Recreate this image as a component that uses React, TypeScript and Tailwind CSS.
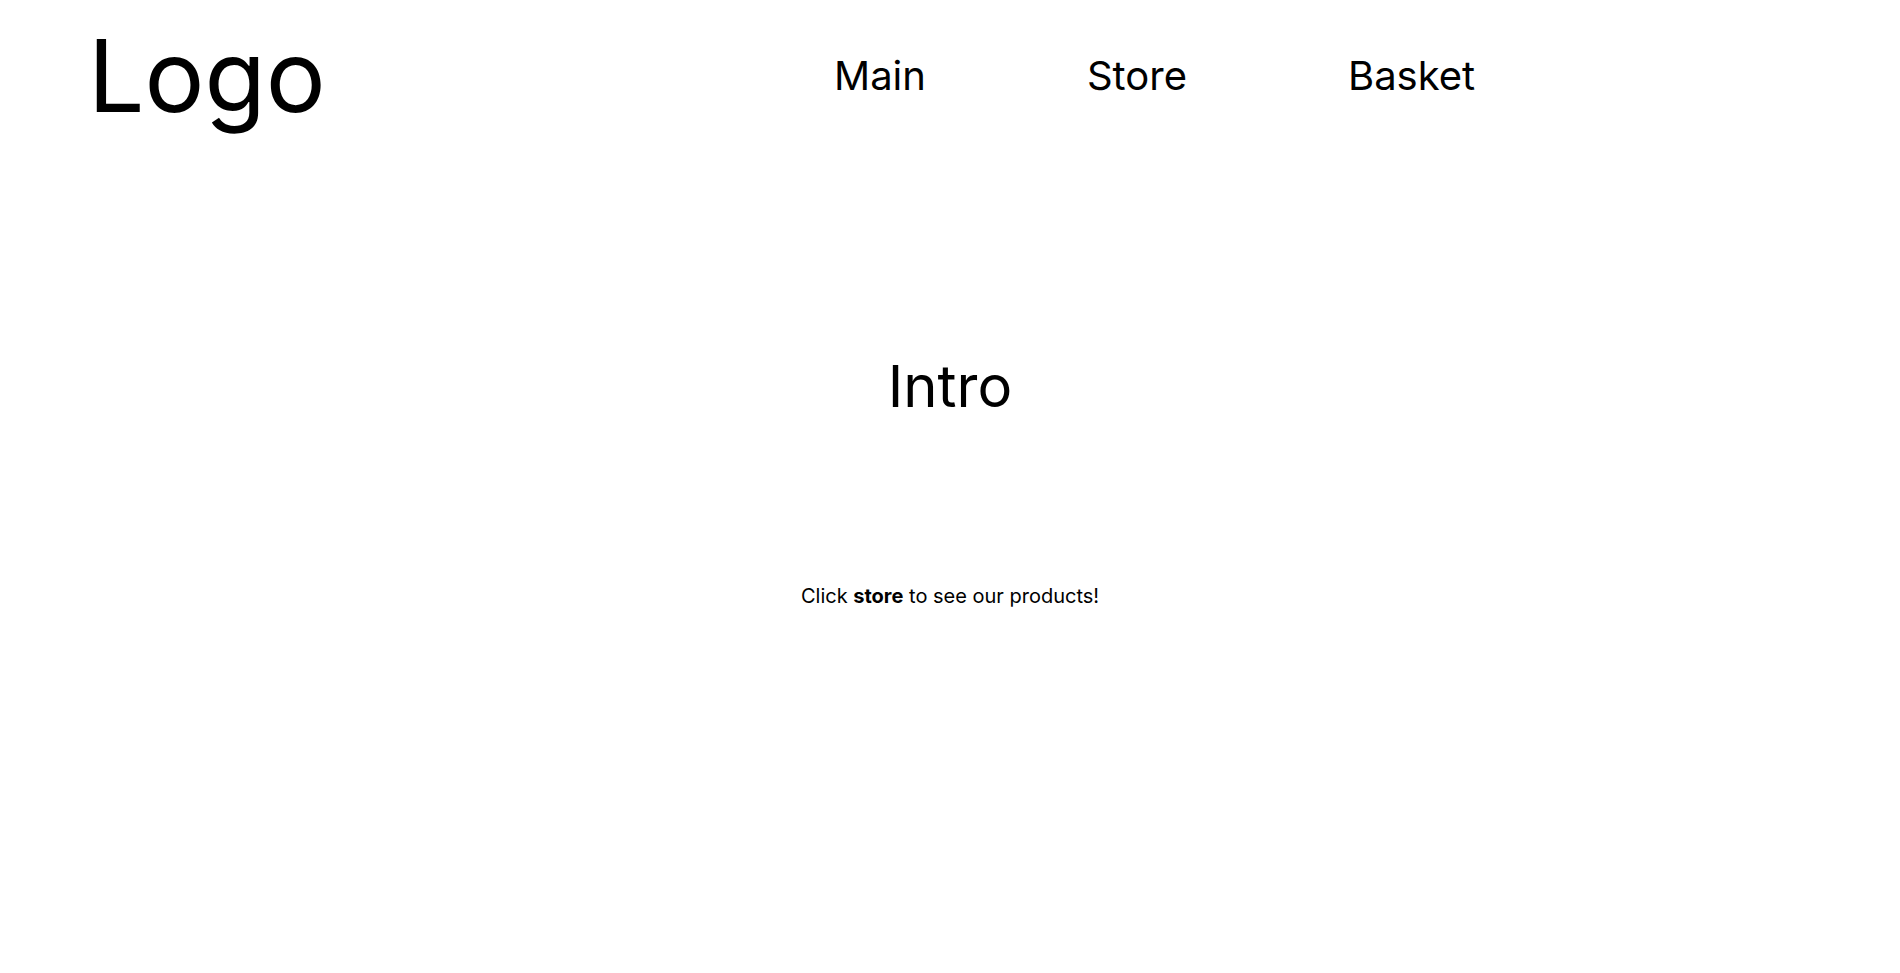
import React from 'react';

const navItems = ['Main', 'Store', 'Basket'];

const App = () => {
    return (
        <div className="min-h-[973px] bg-white text-black" style={{ fontFamily: 'Inter, "Noto Sans", sans-serif' }}>
            <header className="flex items-center pl-[88px] pt-[26px]">
                <div className="w-[746px] text-[100px] leading-none">Logo</div>
                <nav className="flex gap-[161px]">
                    {navItems.map(item => (
                        <a key={item} href="#" className="text-[40px] leading-none">{item}</a>
                    ))}
                </nav>
            </header>

            <main className="flex flex-col items-center">
                <h1 className="mt-[231px] text-[58px] leading-none">Intro</h1>
                <p className="mt-[171px] text-[20px] leading-none">
                    Click <b className="font-bold">store</b> to see our products!
                </p>
            </main>
        </div>
    );
};

export default App;
